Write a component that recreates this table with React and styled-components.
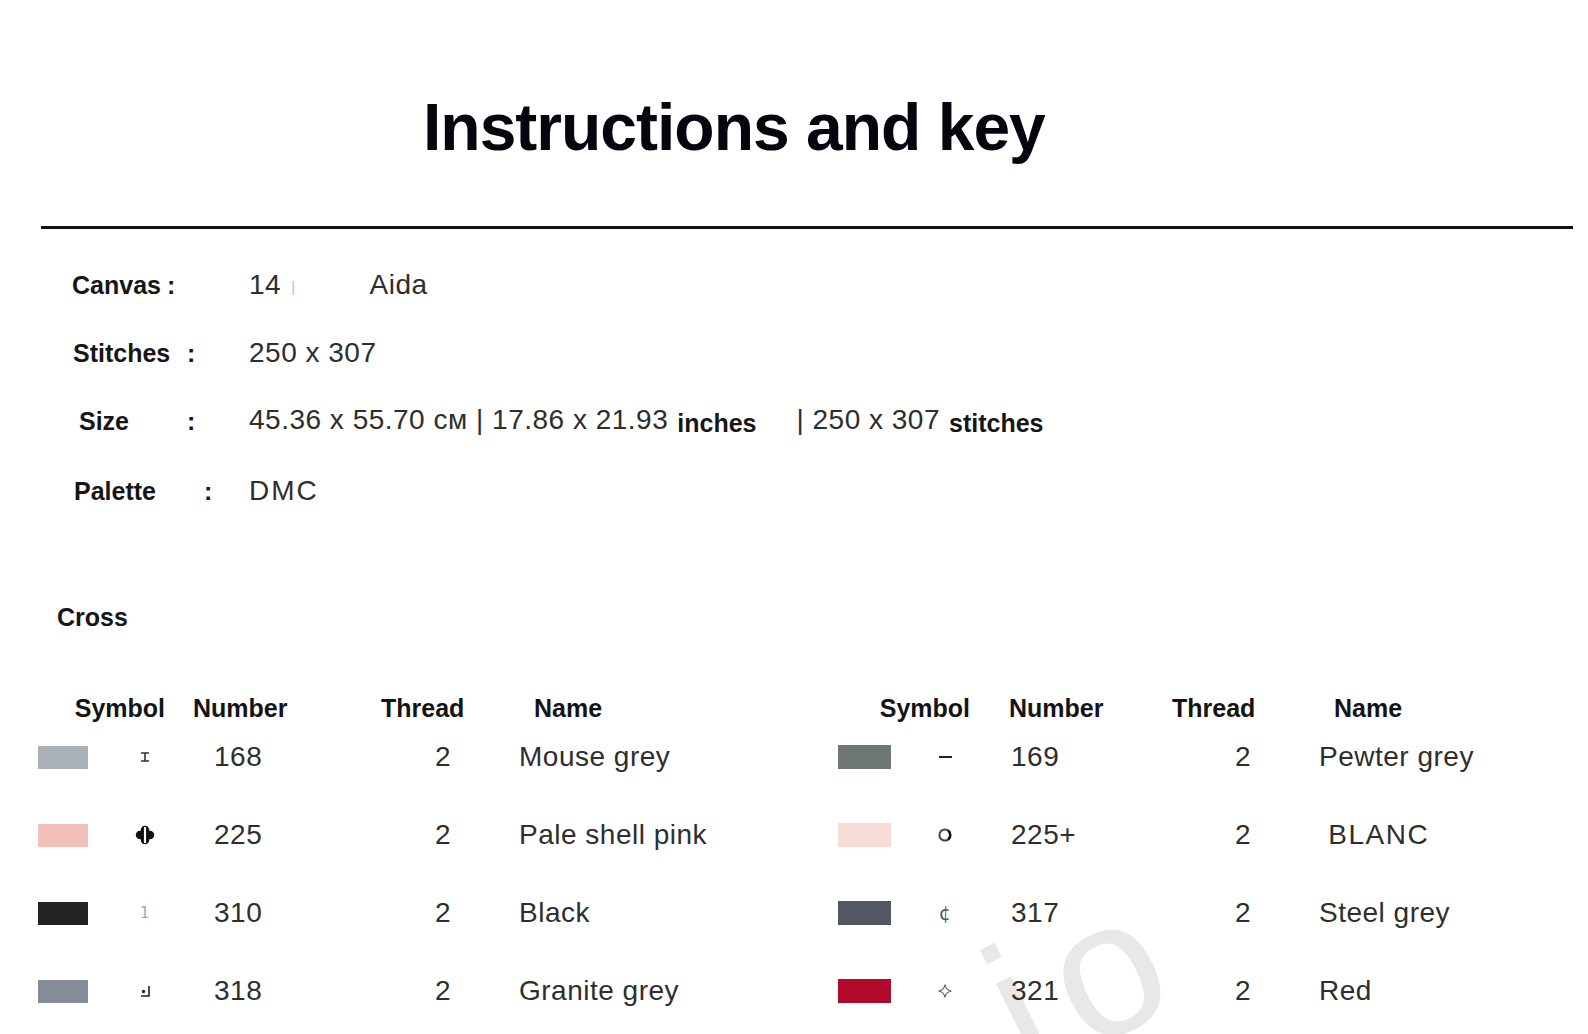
import React from 'react';
import styled, { createGlobalStyle } from 'styled-components';

const GlobalStyle = createGlobalStyle`
  html, body { margin: 0; padding: 0; background: #fff; }
  body { font-family: "Liberation Sans", Arial, sans-serif; overflow: hidden; }
`;

const Page = styled.div`
  position: relative;
  width: 1588px;
  height: 1034px;
  overflow: hidden;
  background: #fff;
  padding-top: 94px;
  box-sizing: border-box;
`;

const Content = styled.div`
  position: relative;
  z-index: 1;
`;

const Title = styled.h1`
  margin: 0 0 0 423px;
  font-size: 66px;
  line-height: 66px;
  font-weight: 700;
  letter-spacing: -1px;
  color: #05050d;
`;

const Rule = styled.div`
  margin: 66px 0 0 41px;
  width: 1532px;
  height: 3px;
  background: #111;
`;

const Info = styled.div`
  display: flex;
  flex-direction: column;
  gap: 34px;
  margin-top: 39px;
`;

const InfoRow = styled.div`
  display: flex;
  align-items: center;
  height: 34px;
  margin-top: ${p => p.$mt || 0}px;
`;

const LabelCell = styled.div`
  display: flex;
  width: 249px;
  padding-left: ${p => p.$indent}px;
  box-sizing: border-box;
  font-size: 25px;
  font-weight: 700;
  color: #161616;
`;

const Label = styled.span`
  width: ${p => p.$w}px;
`;

const Value = styled.span`
  font-size: 28px;
  letter-spacing: ${p => p.$ls ?? 0.5}px;
  color: #2e2e2e;
  white-space: pre;
`;

const Unit = styled.span`
  font-size: 25px;
  font-weight: 700;
  letter-spacing: 0;
  color: #161616;
  vertical-align: -3px;
  margin-left: ${p => p.$ml}px;
`;

const Gap = styled.span`
  display: inline-block;
  width: ${p => p.$w}px;
`;

const Faint = styled.span`
  font-size: 15px;
  color: #bdbdbd;
  vertical-align: 2px;
`;

const Section = styled.div`
  margin: 92px 0 0 57px;
  font-size: 25px;
  line-height: 34px;
  font-weight: 700;
  color: #161616;
`;

const Keys = styled.div`
  display: flex;
  margin-top: 57px;
`;

const Key = styled.div`
  width: ${p => p.$w}px;
  padding-left: ${p => p.$left}px;
  box-sizing: border-box;
  display: flex;
  flex-direction: column;
`;

const cols = '64px 86px 180px 130px 1fr';

const HeadRow = styled.div`
  display: grid;
  grid-template-columns: ${cols};
  height: 34px;
  align-items: center;
  font-size: 25px;
  font-weight: 700;
  color: #141414;
`;

const HeadCell = styled.div`
  grid-column: ${p => p.$span || 'auto'};
  justify-self: ${p => (p.$end ? 'end' : 'start')};
  padding-left: ${p => p.$pl || 0}px;
  padding-right: ${p => p.$pr || 0}px;
`;

const Rows = styled.div`
  display: flex;
  flex-direction: column;
  gap: 44px;
  margin-top: 15px;
`;

const Row = styled.div`
  display: grid;
  grid-template-columns: ${cols};
  height: 34px;
  align-items: center;
  font-size: 28px;
  letter-spacing: 0.5px;
  color: #2e2e2e;
`;

const Swatch = styled.div`
  width: ${p => p.$w}px;
  height: ${p => p.$h}px;
  background: ${p => p.$c};
`;

const Sym = styled.div`
  display: flex;
  justify-content: center;
  align-items: center;
  height: 34px;
  font-family: "DejaVu Sans", sans-serif;
  font-size: ${p => p.$size || 18}px;
  color: ${p => p.$c || '#222'};
`;

const Cell = styled.div`
  padding-left: ${p => p.$pl}px;
  letter-spacing: ${p => p.$ls ?? 0.5}px;
  white-space: pre;
`;

const Watermark = styled.span`
  position: absolute;
  z-index: 0;
  left: 995px;
  top: 872px;
  font-size: 190px;
  line-height: 190px;
  letter-spacing: 22px;
  color: #e8e8e8;
  transform-origin: 117px 111px;
  transform: rotate(-26deg);
  pointer-events: none;
  user-select: none;
`;

const IBeam = () => (
  <svg width="10" height="10" viewBox="0 0 10 10">
    <path d="M1 1h8M5 1v8M1 9h8" stroke="#333" strokeWidth="1.6" fill="none" />
  </svg>
);

const Clover = () => (
  <svg width="20" height="20" viewBox="0 0 16 16">
    <circle cx="8" cy="4" r="3.4" fill="#111" />
    <circle cx="8" cy="12" r="3.4" fill="#111" />
    <circle cx="4" cy="8" r="3.4" fill="#111" />
    <circle cx="12" cy="8" r="3.4" fill="#111" />
    <rect x="6.7" y="1.2" width="2.6" height="13.6" fill="#fff" stroke="#111" strokeWidth="0.8" />
  </svg>
);

const Corner = () => (
  <svg width="12" height="12" viewBox="0 0 12 12">
    <circle cx="4.5" cy="6.5" r="1.7" fill="#222" />
    <path d="M10 1v10H2" stroke="#222" strokeWidth="1.6" fill="none" />
  </svg>
);

const Dash = () => (
  <svg width="13" height="4" viewBox="0 0 13 4">
    <rect x="0" y="1" width="13" height="2" fill="#222" />
  </svg>
);

const Ring = () => (
  <svg width="16" height="16" viewBox="0 0 16 16">
    <circle cx="8" cy="8" r="5.6" stroke="#444" strokeWidth="2" fill="none" />
    <path d="M11 3.6a5.6 5.6 0 0 1 0 8.8" stroke="#111" strokeWidth="2.4" fill="none" />
  </svg>
);

const Sparkle = () => (
  <svg width="16" height="16" viewBox="0 0 16 16">
    <path d="M8 1.5Q8.8 7.2 14.5 8Q8.8 8.8 8 14.5Q7.2 8.8 1.5 8Q7.2 7.2 8 1.5Z" stroke="#666" strokeWidth="1.2" fill="none" />
  </svg>
);

const left = [
  { c: '#a9b0b6', sym: <IBeam />, num: '168', name: 'Mouse grey' },
  { c: '#f2c2ba', sym: <Clover />, num: '225', name: 'Pale shell pink' },
  { c: '#232323', sym: '1', symSize: 15, symColor: '#a8a8a8', num: '310', name: 'Black' },
  { c: '#858b98', sym: <Corner />, num: '318', name: 'Granite grey' },
];

const right = [
  { c: '#6f7676', sym: <Dash />, num: '169', name: 'Pewter grey' },
  { c: '#f8dcd8', sym: <Ring />, num: '225+', name: '\u00a0BLANC', wide: true },
  { c: '#525763', sym: '¢', symSize: 19, symColor: '#555', num: '317', name: 'Steel grey' },
  { c: '#b10a2b', sym: <Sparkle />, num: '321', name: 'Red' },
];

const KeyTable = ({ rows, width, leftPad, sw, head }) => (
  <Key $w={width} $left={leftPad}>
    <HeadRow>
      <HeadCell $span="1 / span 2" $end $pr={head.symbol}>Symbol</HeadCell>
      <HeadCell $pl={head.number}>Number</HeadCell>
      <HeadCell $pl={head.thread}>Thread</HeadCell>
      <HeadCell $pl={36}>Name</HeadCell>
    </HeadRow>
    <Rows>
      {rows.map(r => (
        <Row key={r.num}>
          <Swatch $c={r.c} $w={sw.w} $h={sw.h} />
          <Sym $size={r.symSize} $c={r.symColor}>{r.sym}</Sym>
          <Cell $pl={head.numVal}>{r.num}</Cell>
          <Cell $pl={67}>2</Cell>
          <Cell $pl={21} $ls={r.wide ? 1.5 : 0.5}>{r.name}</Cell>
        </Row>
      ))}
    </Rows>
  </Key>
);

export default function App() {
  return (
    <>
      <GlobalStyle />
      <Page>
        <Watermark aria-hidden="true">io</Watermark>
        <Content>
          <Title>Instructions and key</Title>
          <Rule />
          <Info>
            <InfoRow>
              <LabelCell $indent={72}><Label $w={95}>Canvas</Label>:</LabelCell>
              <Value>14<Gap $w={10} /><Faint>|</Faint><Gap $w={74} />Aida</Value>
            </InfoRow>
            <InfoRow>
              <LabelCell $indent={73}><Label $w={114}>Stitches</Label>:</LabelCell>
              <Value>250 x 307</Value>
            </InfoRow>
            <InfoRow>
              <LabelCell $indent={79}><Label $w={108}>Size</Label>:</LabelCell>
              <Value>
                45.36 x 55.70 см | 17.86 x 21.93<Unit $ml={9}>inches</Unit>
                <Gap $w={40} />| 250 x 307<Unit $ml={9}>stitches</Unit>
              </Value>
            </InfoRow>
            <InfoRow $mt={2}>
              <LabelCell $indent={74}><Label $w={130}>Palette</Label>:</LabelCell>
              <Value $ls={2}>DMC</Value>
            </InfoRow>
          </Info>
          <Section>Cross</Section>
          <Keys>
            <KeyTable
              rows={left}
              width={838}
              leftPad={38}
              sw={{ w: 50, h: 23 }}
              head={{ symbol: 23, number: 5, thread: 13, numVal: 26 }}
            />
            <KeyTable
              rows={right}
              width={750}
              leftPad={0}
              sw={{ w: 53, h: 24 }}
              head={{ symbol: 18, number: 21, thread: 4, numVal: 23 }}
            />
          </Keys>
        </Content>
      </Page>
    </>
  );
}
